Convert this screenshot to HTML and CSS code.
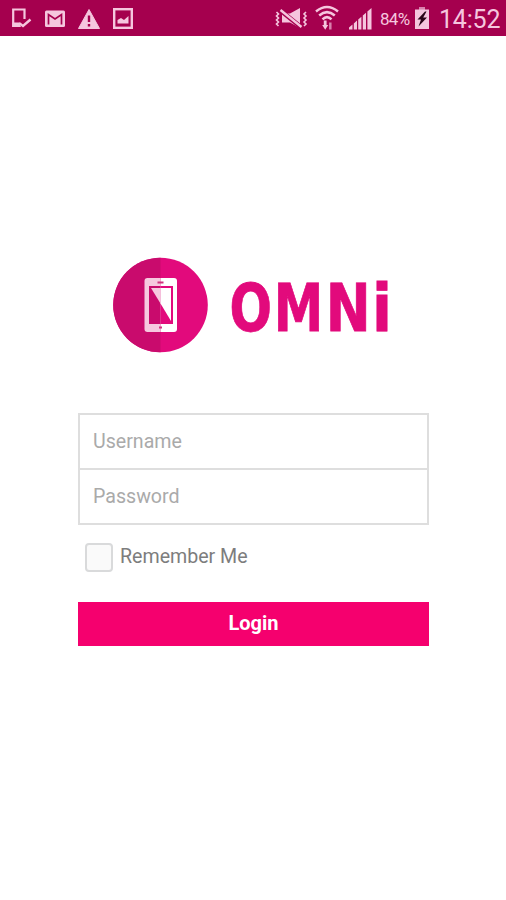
FILE: index.html
```html
<!DOCTYPE html>
<html lang="en">
<head>
    <meta charset="UTF-8">
    <title>OMNi</title>
    <link rel="stylesheet" href="styles.css">
</head>
<body>
    <div class="status-bar">
        <div class="status-left">
            <svg class="icon" width="22" height="24" viewBox="0 0 22 24">
                <path d="M14.500 13V3.500H3.200V20H9" fill="none" stroke="#f5c6de" stroke-width="2.200"/>
                <path d="M2.500 16.500h6.500l2 4.500H2.500z" fill="#f5c6de"/>
                <path d="M9 17l4 3 7.500-6.500" fill="none" stroke="#f5c6de" stroke-width="2.400"/>
            </svg>
            <svg class="icon" width="22" height="24" viewBox="0 0 22 24">
                <rect x="1" y="4.500" width="20" height="16.500" rx="1.500" fill="#f5c6de"/>
                <path d="M4.500 18.500V8.500l6.500 4.500 6.500-4.500v10" fill="none" stroke="#a5004e" stroke-width="1.700"/>
            </svg>
            <svg class="icon" width="22" height="24" viewBox="0 0 22 24">
                <path d="M11 3.500L21.500 22.500H.5z" fill="#f5c6de" stroke="#f5c6de" stroke-linejoin="round"/>
                <path d="M11 9.500v6.500M11 18v2.500" stroke="#a5004e" stroke-width="2.400"/>
            </svg>
            <svg class="icon" width="22" height="24" viewBox="0 0 22 24">
                <rect x="2.200" y="3.200" width="17.600" height="18.600" fill="none" stroke="#f5c6de" stroke-width="2.400"/>
                <path d="M5.500 17.500v-3.500l3.500-2 3 2 4.500-4v7.500z" fill="#f5c6de"/>
            </svg>
        </div>
        <div class="status-right">
            <svg class="icon vibrate" width="34" height="24" viewBox="0 0 34 24">
                <path d="M1.500 6l2 2-2 2 2 2-2 2 2 2-2 2 2 2M31 6l-2 2 2 2-2 2 2 2-2 2 2 2-2 2" fill="none" stroke="#f5c6de" stroke-width="1.600"/>
                <path d="M7 7.500h8l10-5.500v20l-10-5.500H7z" fill="#f5c6de"/>
                <path d="M5.500 4.500l21 17" stroke="#a5004e" stroke-width="4.500"/>
                <path d="M5.500 4l21 17" stroke="#f5c6de" stroke-width="2.400"/>
            </svg>
            <svg class="icon wifi" width="24" height="26" viewBox="0 0 24 26">
                <path d="M1 6.500Q12-2.500 23 6.500M4.200 10.500Q12 3.800 19.800 10.500M7.500 14.300Q12 9.800 16.500 14.300" fill="none" stroke="#f5c6de" stroke-width="2.500"/>
                <path d="M8.800 15.500h2.800v4.500h1.600l-3 4.800-3-4.800h1.600z" fill="#f5c6de"/>
                <path d="M15.300 24.500v-7" stroke="#d981ad" stroke-width="2.500"/>
            </svg>
            <svg class="icon signal" width="24" height="24" viewBox="0 0 24 24">
                <path d="M0 23.500v-2l3.500-3v5zM4.800 23.500v-6l3.200-3v9zM9.200 23.500v-10l3.200-2.800v12.800zM13.800 23.500V9.500l3.200-2.800v16.800zM18.400 23.500V5.500L22.500 2v21.500z" fill="#f5c6de"/>
            </svg>
            <span class="percent">84%</span>
            <svg class="icon battery" width="16" height="24" viewBox="0 0 16 24">
                <path d="M5 1h6v3H5z" fill="#d981ad"/>
                <rect x="1" y="3.500" width="14" height="19.500" fill="#f5c6de"/>
                <path d="M11 5.500L3.500 13.500H7L4.500 20.500 13 11.500H9.200L12.500 5.500z" fill="#2b0518"/>
            </svg>
            <span class="clock">14:52</span>
        </div>
    </div>

    <div class="login">
        <svg class="logo" width="290" height="96" viewBox="0 0 290 96">
            <circle cx="48.500" cy="48" r="47.300" fill="#e20a7c"/>
            <path d="M48.500 .7a47.300 47.300 0 0 0 0 94.600z" fill="#c90b6d"/>
            <path d="M48.500 21h13.500a3 3 0 0 1 3 3v48a3 3 0 0 1-3 3H48.500z" fill="#fff"/>
            <path d="M48.500 21H35.500a3 3 0 0 0-3 3v48a3 3 0 0 0 3 3h13z" fill="#f6c9df"/>
            <path d="M37 29h11.500v38H37z" fill="#c90b6d"/>
            <path d="M48.500 29h12.500v38H48.500z" fill="#e20a7c"/>
            <path d="M39 31h9.500v15.500z" fill="#f6c9df"/>
            <path d="M48.500 31h10.500v33L48.500 46.500z" fill="#fff"/>
            <path d="M45.500 25.500h6M47 70.500h3" stroke="#d0327f" stroke-width="2"/>
            <!-- each letter gets its own width to stay narrow and square -->
            <text class="logo-text" y="73.500"><tspan x="117.500" textLength="42.500" lengthAdjust="spacingAndGlyphs">O</tspan><tspan x="161.800" textLength="49.500" lengthAdjust="spacingAndGlyphs">M</tspan><tspan x="213.800" textLength="45" lengthAdjust="spacingAndGlyphs">N</tspan><tspan x="260" textLength="20" lengthAdjust="spacingAndGlyphs">i</tspan></text>
        </svg>

        <form class="login-form">
            <div class="fields">
                <input class="field" type="text" placeholder="Username">
                <input class="field" type="password" placeholder="Password">
            </div>
            <label class="remember">
                <input class="checkbox" type="checkbox">
                <span>Remember Me</span>
            </label>
            <button class="login-button" type="button">Login</button>
        </form>
    </div>
</body>
</html>
```
FILE: styles.css
```css
* {
    box-sizing: border-box;
}

body {
    margin: 0;
    min-height: 100vh;
    background: #fff;
    font-family: Roboto, sans-serif;
    overflow: hidden;
}

.status-bar {
    display: flex;
    justify-content: space-between;
    height: 36px;
    padding: 6px 6px 0 10px;
    background: #a5004e;
    color: #f5c6de;
}

.status-left {
    display: flex;
    gap: 12px;
}

.status-right {
    display: flex;
}

.icon {
    display: block;
    flex: none;
}

.wifi {
    margin: -1px 10px 0 6px;
}

.percent {
    width: 32px;
    margin: 3px 2px 0 7px;
    font-size: 17px;
    line-height: 20px;
    letter-spacing: -0.7px;
    white-space: nowrap;
}

.clock {
    width: 61px;
    margin-left: 9px;
    font-size: 25px;
    line-height: 28px;
    letter-spacing: -0.2px;
    white-space: nowrap;
}

.login {
    width: 351px;
    margin: 221px 0 0 78px;
}

.logo {
    display: block;
    margin-left: 34px;
}

.logo-text {
    font-family: "DejaVu Sans", sans-serif;
    font-size: 65px;
    font-weight: 700;
    fill: #e20a7c;
    stroke: #e20a7c;
    stroke-width: 0.8px;
}

.login-form {
    margin-top: 60px;
}

.fields {
    border: 2px solid #dedede;
}

.field {
    display: block;
    width: 100%;
    height: 53px;
    padding: 0 13px;
    border: 0;
    background: #fff;
    font-family: inherit;
    font-size: 19.6px;
}

.field + .field {
    height: 55px;
    border-top: 2px solid #dedede;
}

.field::placeholder {
    color: #aaa;
}

.remember {
    display: flex;
    align-items: center;
    gap: 7px;
    margin: 18px 0 0 7px;
    color: #7d7d7d;
    font-size: 19.6px;
}

.remember span {
    margin-top: -3px;
}

.checkbox {
    appearance: none;
    width: 28px;
    height: 29px;
    margin: 0;
    border: 2px solid #d9dadb;
    border-radius: 4px;
    background: #fafafa;
}

.login-button {
    display: block;
    width: 100%;
    height: 44px;
    margin-top: 30px;
    padding: 0 0 3px;
    border: 0;
    background: #f5006e;
    color: #fff;
    font-family: inherit;
    font-size: 20px;
    font-weight: 700;
}
```
